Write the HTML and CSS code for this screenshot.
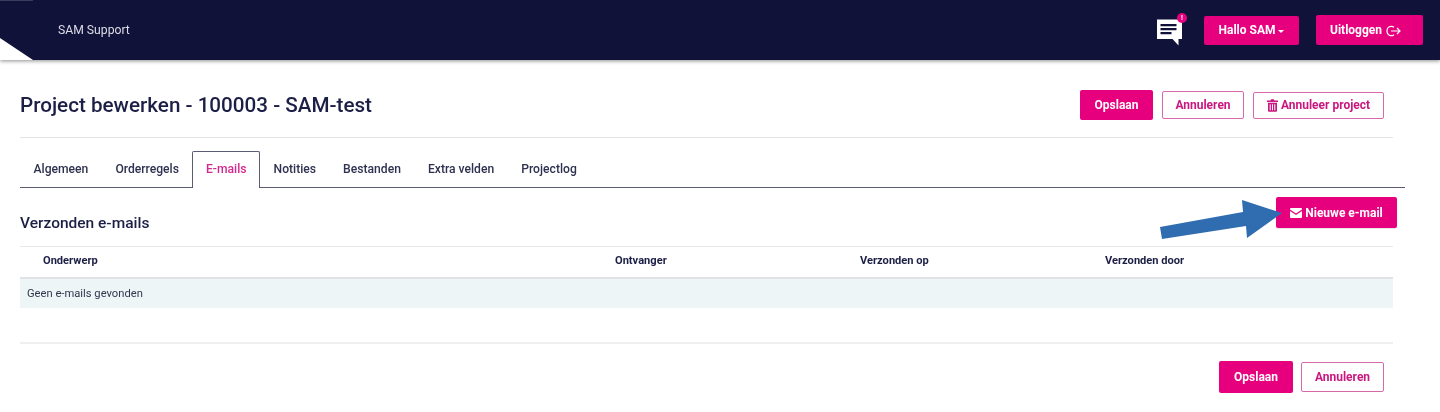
FILE: index.html
```html
<!DOCTYPE html>
<html lang="nl">
<head>
<meta charset="utf-8">
<title>Project bewerken</title>
<link rel="stylesheet" href="styles.css">
</head>
<body>
<header class="topbar">
  <span class="corner"></span>
  <span class="brand">SAM Support</span>
  <div class="topbar-actions">
    <span class="chat">
      <svg width="28" height="30" viewBox="0 0 28 30"><path fill="#fff" d="M1 3.500h25v19.500h-3.500v6.500l-6-6.500H1z"/><path fill="#10123a" d="M4.500 8h16v2.200h-16zM4.500 12h16v2.200h-16zM4.500 16h11v2.200h-11z"/></svg>
      <span class="chat-badge">!</span>
    </span>
    <a class="btn btn-solid btn-hello">Hallo SAM <i class="caret"></i></a>
    <a class="btn btn-solid btn-logout">Uitloggen
      <svg class="logout-icon" width="15" height="12" viewBox="0 0 15 12" fill="none" stroke="currentColor" stroke-width="1.200"><path d="M8 2.300A4.300 4.300 0 0 0 1 6a4.300 4.300 0 0 0 7 3.700"/><path d="M5 6h9M11 3l3 3-3 3"/></svg>
    </a>
  </div>
</header>

<main class="page">
  <div class="title-row">
    <h1>Project bewerken - 100003 - SAM-test</h1>
    <div class="actions">
      <a class="btn btn-solid btn-save">Opslaan</a>
      <a class="btn btn-outline btn-cancel">Annuleren</a>
      <a class="btn btn-outline btn-cancel-project">
        <svg width="11" height="13" viewBox="0 0 11 13" fill="currentColor"><path d="M0 1.600h3.500L4.200.3h2.600l.7 1.300H11v1.300H0zM1 3.800h9v8a1 1 0 0 1-1 1H2a1 1 0 0 1-1-1zm1.700 1.500v6h1v-6zm2.300 0v6h1v-6zm2.300 0v6h1v-6z"/></svg>
        Annuleer project</a>
    </div>
  </div>

  <nav class="tabs">
    <a class="tab">Algemeen</a>
    <a class="tab">Orderregels</a>
    <a class="tab tab-active">E-mails</a>
    <a class="tab">Notities</a>
    <a class="tab">Bestanden</a>
    <a class="tab">Extra velden</a>
    <a class="tab">Projectlog</a>
  </nav>

  <section class="section-head">
    <h2>Verzonden e-mails</h2>
    <a class="btn btn-solid btn-new">
      <svg width="12" height="10" viewBox="0 0 12 10" fill="currentColor"><path d="M1 0h10a1 1 0 0 1 1 1v.6L6 5.500 0 1.600V1a1 1 0 0 1 1-1zM0 3l6 3.900L12 3v6a1 1 0 0 1-1 1H1a1 1 0 0 1-1-1z"/></svg>
      Nieuwe e-mail</a>
  </section>

  <div class="table">
    <div class="thead">
      <span>Onderwerp</span>
      <span>Ontvanger</span>
      <span>Verzonden op</span>
      <span>Verzonden door</span>
    </div>
    <div class="empty">Geen e-mails gevonden</div>
  </div>

  <div class="footer-actions">
    <a class="btn btn-solid btn-save-bottom">Opslaan</a>
    <a class="btn btn-outline btn-cancel-bottom">Annuleren</a>
  </div>

  <svg class="arrow" width="130" height="44" viewBox="0 0 130 44"><path fill="#2f6cb0" d="M0 27 83 12 82 0 122 13 87 38 86 26 2 39z"/></svg>
</main>
</body>
</html>
```
FILE: styles.css
```css
* { box-sizing: border-box; }
html, body { margin: 0; padding: 0; }
body {
  font-family: Roboto, "Liberation Sans", sans-serif;
  color: #1c1f45;
  background: #fff;
  height: 412px;
  overflow: hidden;
  filter: blur(.4px);
}
h1, h2 { margin: 0; font-weight: 500; }

.topbar {
  position: relative;
  height: 60px;
  background: #10123a;
  box-shadow: 0 1px 4px rgba(0, 0, 0, .45);
  display: flex;
  align-items: center;
  padding: 0 17px 0 58px;
  color: #dcdde6;
}
.topbar::before {
  content: "";
  position: absolute;
  left: 0;
  top: 0;
  width: 33px;
  height: 1px;
  background: #3a3c5e;
}
.corner {
  position: absolute;
  left: 0;
  bottom: 0;
  width: 33px;
  height: 22px;
  background: #fff;
  clip-path: polygon(0 0, 100% 100%, 0 100%);
}
.brand { font-size: 12.2px; line-height: 14px; margin-top: -1px; }
.topbar-actions { margin-left: auto; display: flex; align-items: center; }

.chat { position: relative; display: block; width: 28px; height: 30px; margin-right: 20px; margin-top: 2px; }
.chat svg { display: block; }
.chat-badge {
  position: absolute;
  top: -3px;
  right: -3px;
  width: 10px;
  height: 10px;
  border-radius: 50%;
  background: #e6007e;
  color: #fff;
  font-size: 7px;
  font-weight: 700;
  line-height: 10px;
  text-align: center;
}

.btn {
  display: inline-flex;
  align-items: center;
  justify-content: center;
  border-radius: 2px;
  font-size: 12px;
  font-weight: 700;
  white-space: nowrap;
}
.btn-solid { background: #e6007e; color: #fff; }
.btn-outline { background: #fff; color: #c9177f; border: 1px solid #d768ac; }

.btn-hello { width: 95px; height: 29px; margin-right: 17px; }
.caret {
  width: 0;
  height: 0;
  margin: 2px 0 0 3px;
  border: 3px solid transparent;
  border-top-color: #fff;
  border-bottom-width: 0;
}
.btn-logout { width: 107px; height: 30px; justify-content: flex-start; padding-left: 14px; gap: 4px; }
.logout-icon { margin-top: 1px; font-weight: 400; }

.page { position: relative; padding: 24px 0 0 20px; }

.title-row {
  display: flex;
  align-items: center;
  justify-content: space-between;
  width: 1373px;
  height: 54px;
  padding: 0 9px 11px 0;
  border-bottom: 1px solid #e4e4e6;
}
h1 { font-size: 20.65px; line-height: 42px; color: #1c1f45; }
.actions { display: flex; align-items: center; }
.btn-save { width: 73px; height: 30px; margin-right: 9px; }
.btn-cancel { width: 82px; height: 28px; margin-right: 9px; }
.btn-cancel-project { width: 131px; height: 27px; gap: 3px; }

.tabs {
  display: flex;
  width: 1385px;
  height: 37px;
  margin-top: 13px;
  border-bottom: 1px solid #5b5d74;
}
.tab {
  height: 36px;
  padding: 0 12.500px;
  font-size: 12.150px;
  font-weight: 500;
  line-height: 35px;
  color: #2e3150;
  border: 1px solid transparent;
  border-bottom: 0;
}
.tab-active {
  height: 37px;
  color: #d4288f;
  background: #fff;
  border-color: #5b5d74;
  border-radius: 2px 2px 0 0;
}

.section-head {
  display: flex;
  align-items: center;
  justify-content: space-between;
  width: 1377px;
  height: 58px;
  padding-top: 2px;
}
h2 { font-size: 15.500px; line-height: 20px; margin-top: 10px; color: #1c1f45; }
.btn-new { width: 121px; height: 31px; gap: 3px; margin-top: -11px; box-shadow: 0 1px 1px rgba(0, 0, 0, .1); }

.table { width: 1373px; }
.thead {
  display: grid;
  grid-template-columns: 572px 245px 245px 1fr;
  height: 33px;
  padding-left: 23px;
  border-top: 1px solid #e8e8ea;
  border-bottom: 2px solid #e2e2e4;
  font-size: 11.100px;
  font-weight: 700;
  line-height: 28px;
  color: #1c1f45;
}
.empty {
  height: 29px;
  padding-left: 7px;
  background: #eef5f7;
  font-size: 11.200px;
  line-height: 30px;
  color: #33364f;
}

.footer-actions {
  display: flex;
  justify-content: flex-end;
  align-items: center;
  gap: 8px;
  width: 1373px;
  height: 51px;
  margin-top: 34px;
  padding: 17px 9px 0 0;
  border-top: 2px solid #efefef;
}
.btn-save-bottom { width: 74px; height: 32px; }
.btn-cancel-bottom { width: 83px; height: 30px; }

.arrow { position: absolute; left: 1160px; top: 140px; }
```
